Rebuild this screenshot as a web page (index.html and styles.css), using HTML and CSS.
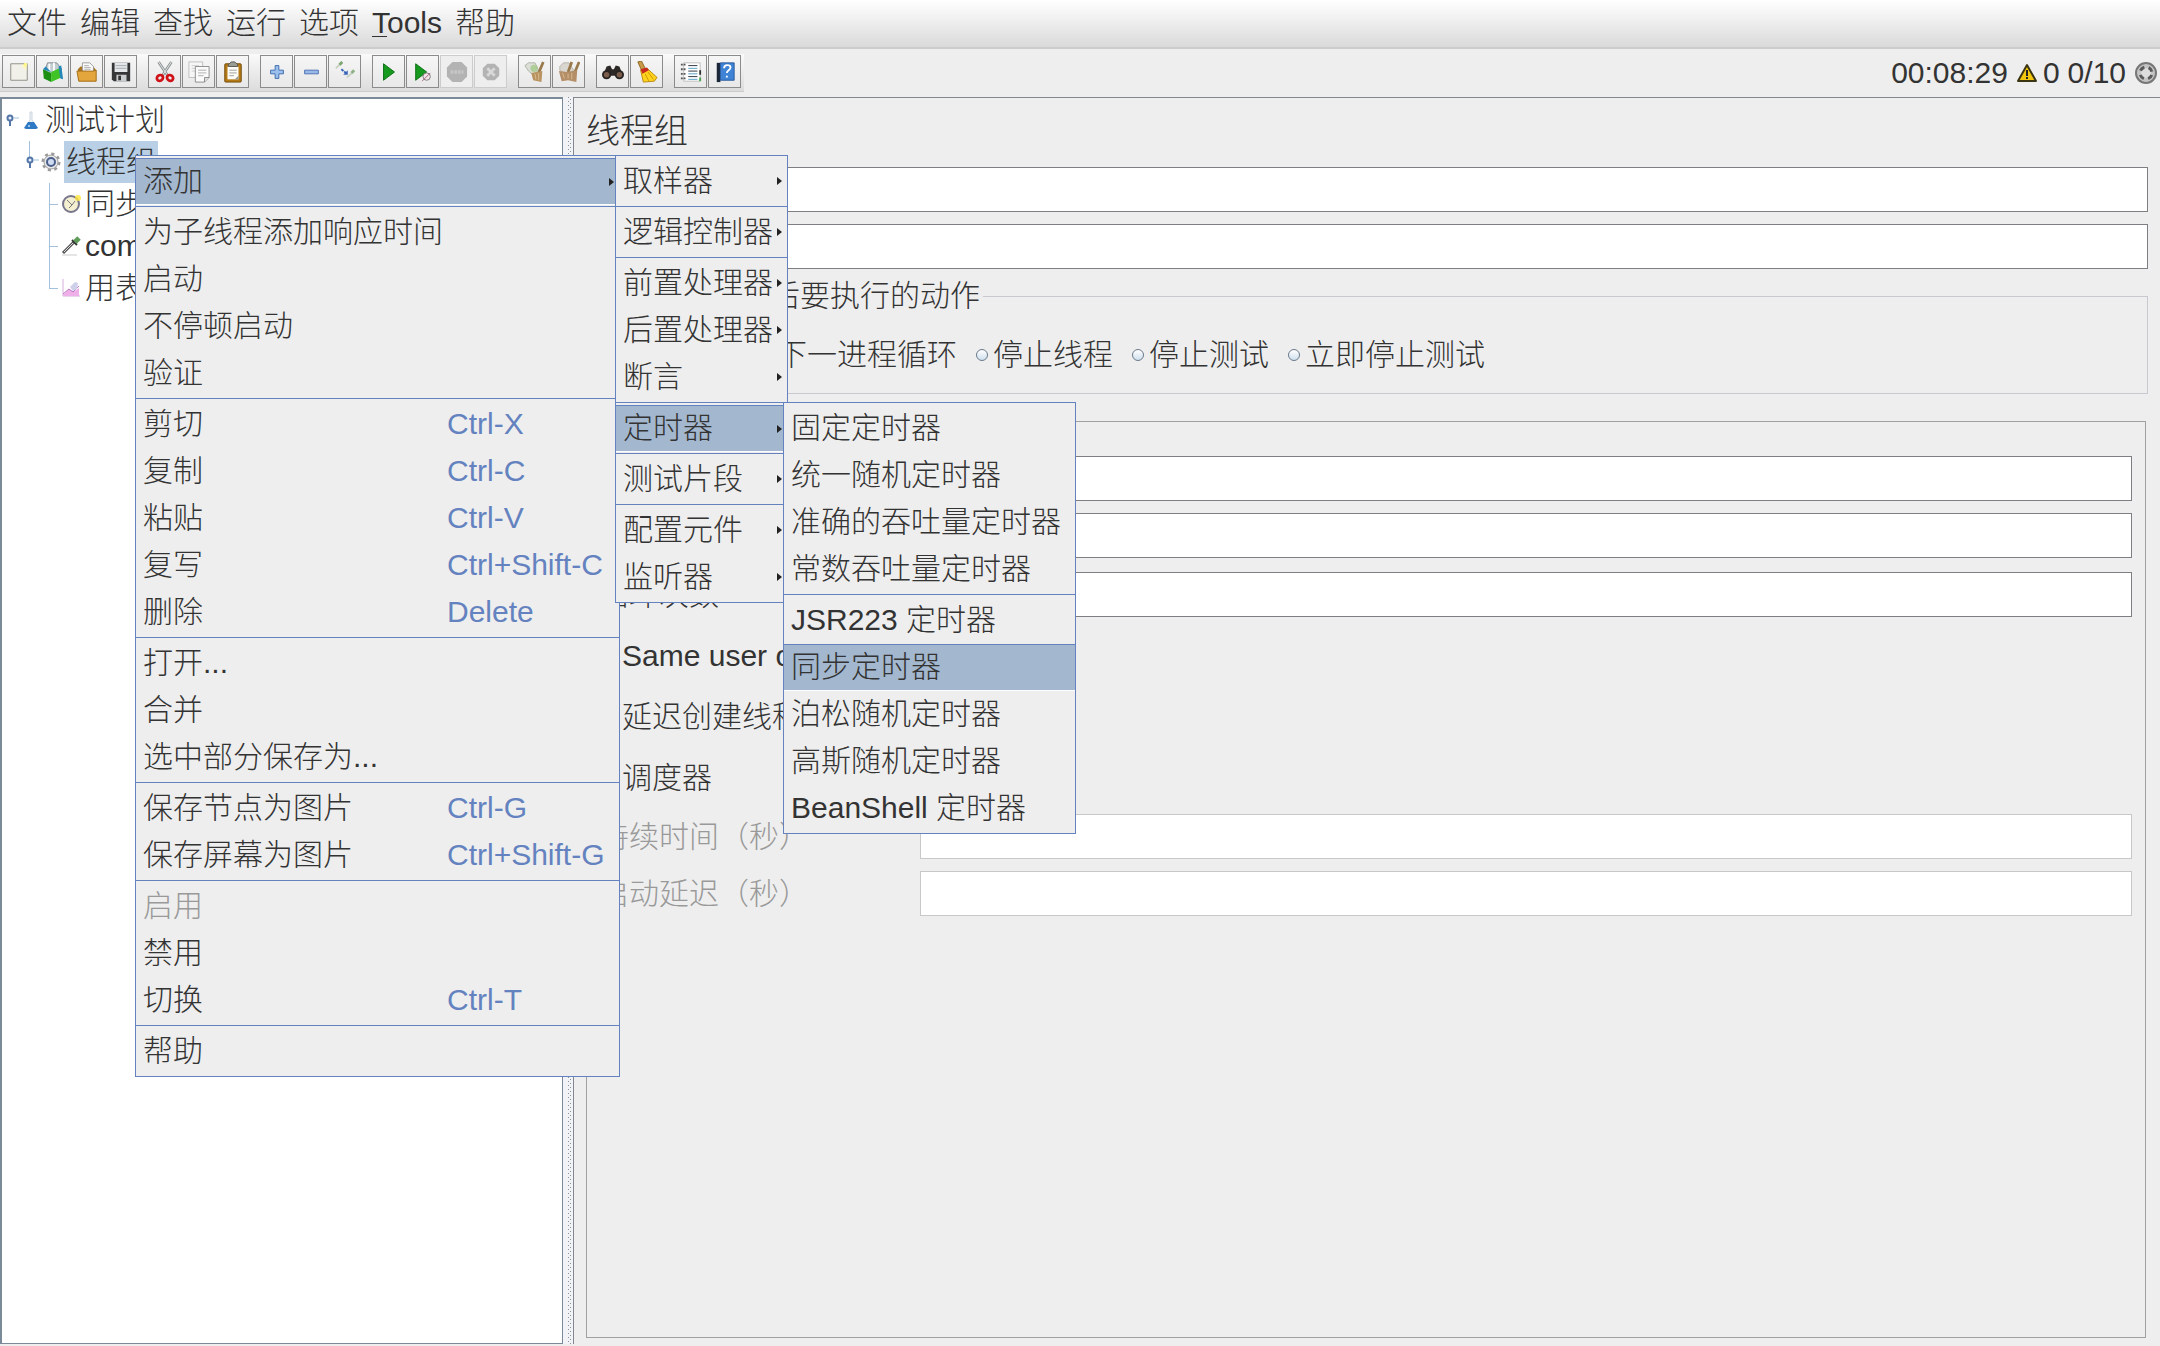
FILE: index.html
```html
<!DOCTYPE html>
<html lang="zh-CN">
<head>
<meta charset="utf-8">
<title>线程组</title>
<link rel="stylesheet" href="styles.css">
</head>
<body>
<nav class="menubar">
  <button>文件</button><button>编辑</button><button>查找</button><button>运行</button><button>选项</button><button><u>T</u>ools</button><button>帮助</button>
</nav>

<header class="bar">
  <div class="toolbar">
    <div class="group">
      <button class="tool" aria-label="新建"><svg viewBox="0 0 24 24"><path d="M3 3h18v18H3z" fill="#f1f1ea" stroke="#8b8b80"/><path d="M14 4h6v7z" fill="#fdf8bf"/><circle cx="19" cy="4" r="2" fill="#fff68b"/></svg></button>
      <button class="tool" aria-label="模板"><svg viewBox="0 0 24 24"><path d="M4 8l2-6h10l5 6v8H4z" fill="#c3ccd0" stroke="#7e8a90"/><path d="M8 3v8M13 2v9" stroke="#fff" stroke-width="2"/><path d="M1 9l9 4v10l-8-4z" fill="#1a8f12"/><path d="M10 12l9-4 2 10-11 5z" fill="#3fc326"/><path d="M1 9l3-3 6 6zM18 6l3-1 2 15-3-1z" fill="#2487b8"/></svg></button>
      <button class="tool" aria-label="打开"><svg viewBox="0 0 24 24"><path d="M2 9l3-3h14l3 4v12H3z" fill="#a8741d"/><path d="M7 11V2h8l4 4v6z" fill="#fafafa" stroke="#999"/><path d="M9 5h5M9 7h7M9 9h7" stroke="#aaa"/><path d="M1 11h18l3-1v12H3z" fill="#e2a63c" stroke="#a16c15"/></svg></button>
      <button class="tool" aria-label="保存"><svg viewBox="0 0 24 24"><path d="M2 2h20v20H4l-2-2z" fill="#343638"/><path d="M5 2h14v10H5z" fill="#e4e7e9"/><path d="M6 5h12M6 8h12" stroke="#a5abb0"/><path d="M7 15h11v7H7z" fill="#c9cdd0"/><path d="M9 16h3v5H9z" fill="#333"/></svg></button>
    </div>
    <div class="group">
      <button class="tool" aria-label="剪切"><svg viewBox="0 0 24 24"><path d="M5 1l10 15M19 1L9 16" stroke="#8d9294" stroke-width="3"/><path d="M5 1l10 15M19 1L9 16" stroke="#eceeee"/><ellipse cx="6.500" cy="18.500" rx="3.500" ry="3" fill="none" stroke="#d01218" stroke-width="3" transform="rotate(-35 6.500 18.500)"/><ellipse cx="17.500" cy="18.500" rx="3.500" ry="3" fill="none" stroke="#d01218" stroke-width="3" transform="rotate(35 17.500 18.500)"/></svg></button>
      <button class="tool" aria-label="复制"><svg viewBox="0 0 24 24"><path d="M1 1h15v17H1z" fill="#f6f6f6" stroke="#bdbdbd"/><path d="M4 5h8M4 8h5M4 11h5" stroke="#ccc"/><path d="M8 6h15v12l-5 5H8z" fill="#fafafa" stroke="#888"/><path d="M11 10h9M11 13h9M11 16h6" stroke="#aaa"/><path d="M18 23v-5h5" fill="#ddd" stroke="#888"/></svg></button>
      <button class="tool" aria-label="粘贴"><svg viewBox="0 0 24 24"><rect x="3" y="3" width="18" height="20" rx="1" fill="#b57a16" stroke="#70480a"/><path d="M6 6h12v14H6z" fill="#fcfcf8"/><path d="M8 10h8M8 13h8M8 16h5" stroke="#999"/><path d="M14 20l4-4v4z" fill="#999"/><path d="M7 6V4l3-3h4l3 3v2z" fill="#9a9d94" stroke="#555"/></svg></button>
    </div>
    <div class="group">
      <button class="tool" aria-label="展开"><svg viewBox="0 0 24 24"><path d="M10 5h4v5h5v4h-5v5h-4v-5H5v-4h5z" fill="#9bc0ee" stroke="#3a67ae"/></svg></button>
      <button class="tool" aria-label="折叠"><svg viewBox="0 0 24 24"><path d="M5 10h15v4H5z" fill="#9bb9e6" stroke="#4a6fb5"/></svg></button>
      <button class="tool" aria-label="切换"><svg viewBox="0 0 24 24"><path d="M2 8l7-7" stroke="#c5d0c0" stroke-width="2"/><path d="M6 4l3-3" stroke="#7da572" stroke-width="3"/><path d="M14 18l8-7" stroke="#c9d2c5" stroke-width="2"/><path d="M19 13l3-3" stroke="#8fb285" stroke-width="3"/><path d="M8 9l5 4" stroke="#3564b8" stroke-width="2" stroke-dasharray="3 1"/><path d="M15 10v5h-5z" fill="#3564b8"/></svg></button>
    </div>
    <div class="group">
      <button class="tool" aria-label="启动"><svg viewBox="0 0 24 24"><path d="M6 3l12 9-12 9z" fill="#159a1e" stroke="#0b6c13"/></svg></button>
      <button class="tool" aria-label="不停顿启动"><svg viewBox="0 0 24 24"><path d="M4 3l12 9-12 9z" fill="#159a1e" stroke="#0b6c13"/><circle cx="16" cy="17" r="4" fill="#f3e4ea" stroke="#777"/><path d="M11 22l9-9" stroke="#a0607a"/></svg></button>
      <button class="tool off" disabled aria-label="停止"><svg viewBox="0 0 24 24"><path d="M7 1h10l6 6v10l-6 6H7l-6-6V7z" fill="#b3b3b3"/><path d="M5 12h14" stroke="#c6c6c6" stroke-width="4" stroke-dasharray="3 1"/></svg></button>
      <button class="tool off" disabled aria-label="关闭"><svg viewBox="0 0 24 24"><path d="M8 3h8l5 5v8l-5 5H8l-5-5V8z" fill="#b3b3b3"/><path d="M8 8l8 8M16 8l-8 8" stroke="#d8d8d8" stroke-width="3"/></svg></button>
    </div>
    <div class="group">
      <button class="tool" aria-label="清除"><svg viewBox="0 0 24 24"><path d="M1 5l4-3h7l4 8-6 5-5-4z" fill="#dcded8" stroke="#aab0a2"/><circle cx="11" cy="8" r="4" fill="#a5c98a" opacity=".8"/><path d="M21 1l-5 12" stroke="#9a7a4c" stroke-width="3"/><path d="M8 13l12-2-1 12-9-2z" fill="#b8935f"/><path d="M12 14l1 6M16 13v8" stroke="#d9bd90"/></svg></button>
      <button class="tool" aria-label="清除全部"><svg viewBox="0 0 24 24"><path d="M2 6l4-4h6l5 8-8 5-7-5z" fill="#dad7d1" stroke="#b5b0a6"/><path d="M15 1l-4 11M23 1l-5 12" stroke="#9a7a4c" stroke-width="3"/><path d="M1 11l9 1 11-2-1 13-9-2-7 1z" fill="#b48e66"/><path d="M5 13l2 6M11 14v5M15 13v7" stroke="#d9bd95"/></svg></button>
    </div>
    <div class="group">
      <button class="tool" aria-label="查找"><svg viewBox="0 0 24 24"><path d="M5 6l4-1 2 4h2l2-4 4 1 4 10H1z" fill="#2c2826"/><circle cx="5" cy="15" r="5" fill="#262322"/><circle cx="19" cy="15" r="5" fill="#262322"/><circle cx="5" cy="15" r="3" fill="#7c5c4a"/><circle cx="19" cy="15" r="3" fill="#7c5c4a"/></svg></button>
      <button class="tool" aria-label="重置查找"><svg viewBox="0 0 24 24"><path d="M2 1l4-1 4 8-4 2z" fill="#c99a4a" stroke="#8b641e"/><path d="M5 10l7-2 11 10-3 4-12 1z" fill="#ffd21c" stroke="#b8860b"/><path d="M5 9l7-2 2 3-7 4z" fill="#c9281e"/><path d="M10 14l4 8M13 12l6 8" stroke="#c99400"/></svg></button>
    </div>
    <div class="group">
      <button class="tool" aria-label="函数助手"><svg viewBox="0 0 24 24"><path d="M4 2h18v20H4z" fill="#fff" stroke="#bbb"/><path d="M9 5h10M9 11h10M9 17h10" stroke="#252a33"/><path d="M9 8h10M9 14h10M9 20h10" stroke="#4e9bc4"/><path d="M1 4h5M1 9h5M1 14h5M1 19h5" stroke="#555" stroke-width="2" stroke-dasharray="2 1"/><path d="M22 10v5" stroke="#333" stroke-width="2"/><path d="M22 18v4" stroke="#43a047" stroke-width="2"/></svg></button>
      <button class="tool" aria-label="帮助"><svg viewBox="0 0 24 24"><path d="M3 2h4v21H3z" fill="#1b2738"/><path d="M7 2h15v19H7z" fill="#3f83d6" stroke="#27599c"/><path d="M11 8c0-5 7-4 7-1 0 3-4 3-4 6M14 16v2" fill="none" stroke="#fff" stroke-width="2"/></svg></button>
    </div>
  </div>
  <div class="status">
    <span class="elapsed">00:08:29</span>
    <svg class="warn" viewBox="0 0 22 20"><path d="M11 2l9 16H2z" fill="#f4c50f" stroke="#3b3413" stroke-width="2" stroke-linejoin="round"/><path d="M11 7v6M11 14v2" stroke="#222" stroke-width="2"/></svg>
    <span class="errors">0</span>
    <span>0/10</span>
    <svg class="remote" viewBox="0 0 24 24"><circle cx="12" cy="12" r="10" fill="#c4c4c4" stroke="#777" stroke-width="2"/><circle cx="12" cy="12" r="5" fill="#ddd"/><circle cx="12" cy="12" r="6" fill="none" stroke="#5a5a5a" stroke-width="3" stroke-dasharray="5 4.425" stroke-dashoffset="-2"/></svg>
  </div>
</header>

<main class="split">
  <aside class="tree">
    <div class="node n1">
      <svg class="handle" viewBox="0 0 14 14"><circle cx="5" cy="5" r="2.500" fill="#e4eefa" stroke="#5577a8" stroke-width="2"/><path d="M5 8v5" stroke="#5577a8" stroke-width="2"/><path d="M8 5h6" stroke="#a3c0dc"/></svg>
      <svg class="icon" viewBox="0 0 20 20"><path d="M9 2h2v8l5 8H4l5-8z" fill="#eef2f6" stroke="#ccd6df"/><path d="M7 12h6l4 6-2 1H5l-2-1z" fill="#2f78c4"/><circle cx="8" cy="16" r="1" fill="#b9dcf6"/></svg>
      <span>测试计划</span>
    </div>
    <div class="node n2">
      <svg class="handle" viewBox="0 0 14 14"><circle cx="5" cy="5" r="2.500" fill="#e4eefa" stroke="#5577a8" stroke-width="2"/><path d="M5 8v5" stroke="#5577a8" stroke-width="2"/><path d="M8 5h6" stroke="#a3c0dc"/></svg>
      <svg class="icon" viewBox="0 0 20 20"><circle cx="10" cy="10" r="8" fill="none" stroke="#9a9a9a" stroke-width="3" stroke-dasharray="3 3.283"/><circle cx="10" cy="10" r="7" fill="#e8e8e8" stroke="#a0a0a0"/><circle cx="10" cy="10" r="4" fill="#cfdcf2" stroke="#4a5f8a" stroke-width="2"/></svg>
      <span class="selected">线程组</span>
    </div>
    <div class="children">
      <div class="node">
        <svg class="icon" viewBox="0 0 20 20"><circle cx="10" cy="10" r="8" fill="#f3efd0" stroke="#77758c" stroke-width="2"/><path d="M6 6l5 5-3 3M11 11l3-4" fill="none" stroke="#777"/><circle cx="17" cy="4" r="3" fill="#ffe53a" opacity=".8"/></svg>
        <span>同步定时器</span>
      </div>
      <div class="node">
        <svg class="icon" viewBox="0 0 20 20"><path d="M2 17L13 6" stroke="#555" stroke-width="3"/><path d="M3 16L13 6" stroke="#d7dcd5"/><path d="M11 4l5 5" stroke="#333" stroke-width="2"/><path d="M14 6l4-4" stroke="#5f9c5a" stroke-width="5"/><path d="M1 19h15" stroke="#ccc"/></svg>
        <span>com</span>
      </div>
      <div class="node">
        <svg class="icon" viewBox="0 0 20 20"><path d="M2 1v17h17" fill="none" stroke="#d3b0db"/><path d="M2 17l6-6 4 3 6-4v8H2z" fill="#efb0ea"/><path d="M2 16l6-5 4 3 6-6" fill="none" stroke="#b96fc0"/><path d="M9 9l5-5 3 1-1 6-4 2z" fill="#cfd0ea"/></svg>
        <span>用表格察看结果</span>
      </div>
    </div>
  </aside>
  <div class="divider"></div>
  <section class="panel">
    <h1>线程组</h1>
    <div class="row top"><label for="name">名称：</label><input id="name" type="text"></div>
    <div class="row top"><label for="note">注释：</label><input id="note" type="text"></div>
    <fieldset class="actions">
      <legend>在取样器错误后要执行的动作</legend>
      <div class="radios">
        <label><input type="radio" name="act" checked>继续</label>
        <label><input type="radio" name="act">启动下一进程循环</label>
        <label><input type="radio" name="act">停止线程</label>
        <label><input type="radio" name="act">停止测试</label>
        <label><input type="radio" name="act">立即停止测试</label>
      </div>
    </fieldset>
    <fieldset class="props">
      <legend>线程属性</legend>
      <div class="row"><label for="threads">线程数：</label><input id="threads" type="text"></div>
      <div class="row"><label for="ramp">Ramp-Up时间（秒）：</label><input id="ramp" type="text"></div>
      <div class="row loops"><label for="loops">循环次数</label><input id="loops" type="text"></div>
      <label class="check"><input type="checkbox">Same user on each iteration</label>
      <label class="check"><input type="checkbox">延迟创建线程直到需要</label>
      <label class="check"><input type="checkbox">调度器</label>
      <div class="row off"><label for="dur">持续时间（秒）</label><input id="dur" type="text" disabled></div>
      <div class="row off"><label for="delay">启动延迟（秒）</label><input id="delay" type="text" disabled></div>
    </fieldset>
  </section>
</main>

<div class="menu context" role="menu">
  <button class="on more">添加</button>
  <hr>
  <button>为子线程添加响应时间</button>
  <button>启动</button>
  <button>不停顿启动</button>
  <button>验证</button>
  <hr>
  <button>剪切<kbd>Ctrl-X</kbd></button>
  <button>复制<kbd>Ctrl-C</kbd></button>
  <button>粘贴<kbd>Ctrl-V</kbd></button>
  <button>复写<kbd>Ctrl+Shift-C</kbd></button>
  <button>删除<kbd>Delete</kbd></button>
  <hr>
  <button>打开...</button>
  <button>合并</button>
  <button>选中部分保存为...</button>
  <hr>
  <button>保存节点为图片<kbd>Ctrl-G</kbd></button>
  <button>保存屏幕为图片<kbd>Ctrl+Shift-G</kbd></button>
  <hr>
  <button disabled>启用</button>
  <button>禁用</button>
  <button>切换<kbd>Ctrl-T</kbd></button>
  <hr>
  <button>帮助</button>
</div>

<div class="menu add" role="menu">
  <button class="more">取样器</button>
  <hr>
  <button class="more">逻辑控制器</button>
  <hr>
  <button class="more">前置处理器</button>
  <button class="more">后置处理器</button>
  <button class="more">断言</button>
  <hr>
  <button class="on more">定时器</button>
  <hr>
  <button class="more">测试片段</button>
  <hr>
  <button class="more">配置元件</button>
  <button class="more">监听器</button>
</div>

<div class="menu timers" role="menu">
  <button>固定定时器</button>
  <button>统一随机定时器</button>
  <button>准确的吞吐量定时器</button>
  <button>常数吞吐量定时器</button>
  <hr>
  <button>JSR223 定时器</button>
  <button class="on">同步定时器</button>
  <button>泊松随机定时器</button>
  <button>高斯随机定时器</button>
  <button>BeanShell 定时器</button>
</div>
</body>
</html>
```
FILE: styles.css
```css
* { box-sizing: border-box; }

body {
  margin: 0;
  min-height: 100vh;
  display: flex;
  flex-direction: column;
  position: relative;
  overflow-x: hidden;
  background: #eee;
  color: #333;
  font: 300 30px/34px "Liberation Sans", "Noto Sans CJK SC", sans-serif;
}

button, input { font: inherit; color: inherit; }

/* Menu bar */
.menubar {
  display: flex;
  gap: 13px;
  height: 49px;
  padding: 0 7px 2px;
  background: linear-gradient(#fff, #dadada);
  border-bottom: 2px solid #ccc;
}
.menubar button { border: 0; padding: 0; background: none; white-space: nowrap; }
.menubar u { text-underline-offset: 3px; text-decoration-thickness: 1px; }

/* Toolbar and run status */
.bar {
  display: flex;
  justify-content: space-between;
  align-items: flex-start;
  height: 48px;
}
.toolbar {
  display: flex;
  gap: 11px;
  margin-top: 5px;
  padding: 1px 3px 3px 2px;
  background: linear-gradient(#fafafa, #dcdcdc);
  border-bottom: 1px solid #ccc;
}
.group { display: flex; gap: 1px; }
.tool {
  display: grid;
  place-items: center;
  width: 33px;
  height: 33px;
  padding: 0;
  border: 1px solid #8b8b8b;
  background: linear-gradient(#f6f6f6, #e8e8e8);
}
.tool svg { width: 22px; height: 22px; }
.tool.off { border-color: #ccc; background: #eee; }
.status { display: flex; align-items: center; height: 47px; padding-right: 2px; }
.elapsed { margin-right: 8px; }
.warn { width: 22px; height: 20px; margin-right: 5px; }
.errors { margin-right: 8px; }
.remote { width: 24px; height: 24px; margin-left: 8px; }

/* Split view */
.split { flex: 1; display: grid; grid-template-columns: 563px 10px 1fr; padding-bottom: 2px; }

.tree { background: #fff; border: 1px solid #7a8a99; border-width: 2px 1px 1px 2px; }
.node { display: flex; align-items: center; height: 42px; white-space: nowrap; }
.handle { width: 14px; height: 14px; flex: none; }
.icon { width: 20px; height: 20px; flex: none; }
.n1 { padding-left: 3px; }
.n1 .icon { margin: 0 4px 0 2px; }
.n2 { padding-left: 23px; background: linear-gradient(#a3c0dc, #a3c0dc) 27px 0 / 1px 16px no-repeat; }
.n2 .icon { margin: 0 3px 0 2px; }
.selected { height: 42px; padding: 4px 2px; background: #b8cfe5; }
.children {
  margin-left: 47px;
  background: linear-gradient(#a3c0dc, #a3c0dc) 0 0 / 1px 106px no-repeat;
}
.children .node { padding-left: 12px; background: linear-gradient(#a3c0dc, #a3c0dc) 0 21px / 9px 1px no-repeat; }
.children .icon { margin-right: 4px; }

.divider {
  background:
    linear-gradient(#8a8f96 1px, transparent 1px) 5px 0 / 1px 4px repeat-y,
    linear-gradient(#8a8f96 1px, transparent 1px) 7px 2px / 1px 4px repeat-y,
    #f1f3f6;
}

.panel {
  display: flex;
  flex-direction: column;
  padding: 13px 12px 6px;
  border: 1px solid #828790;
  border-width: 1px 0 0 1px;
}
h1 { margin: 0 0 16px; font-size: 34px; line-height: 40px; font-weight: 300; }
.row { display: flex; align-items: center; margin-bottom: 12px; }
.row label { flex: none; width: 321px; white-space: nowrap; }
.row.top label { width: 100px; }
.row input { flex: 1; min-width: 0; height: 45px; padding: 0 4px; background: #fff; border: 1px solid #7f7f83; }
.row.off { color: #999; }
.row.off input { border-color: #c8c8c8; }

fieldset { min-width: 0; margin: 0 0 10px; border: 1px solid #a0a0a0; }
legend { padding: 0 3px; }
.actions { margin-top: -2px; padding: 20px 0 16px; border-color: #c8c8d0; }
.radios { display: flex; gap: 19px; padding-left: 17px; }
.radios label { display: flex; align-items: center; gap: 5px; height: 44px; white-space: nowrap; }
input[type="radio"] {
  appearance: none;
  width: 12px;
  height: 12px;
  margin: 0;
  border: 1px solid #6a7a8a;
  border-radius: 50%;
  background: linear-gradient(#fff, #cfe0ee);
}
.props { flex: 1; margin: 0 2px 0 0; padding: 18px 13px 0 12px; }
.loops { padding: 2px 0; margin-bottom: 6px; }
.check { display: flex; align-items: center; gap: 5px; height: 61px; }
.check + .row { margin-top: 6px; }
.check input { appearance: none; width: 18px; height: 18px; margin: 0; border: 1px solid #7a8a99; }

/* Popup menus */
.menu {
  position: absolute;
  padding: 2px 0 1px;
  background: #eee;
  border: 1px solid #6382bf;
}
.context { left: 135px; top: 155px; width: 485px; }
.add { left: 615px; top: 155px; width: 173px; }
.timers { left: 783px; top: 402px; width: 293px; }
.menu button {
  display: block;
  position: relative;
  width: 100%;
  height: 47px;
  padding: 0 7px 2px;
  border: 0;
  background: none;
  text-align: left;
  white-space: nowrap;
}
.menu button:disabled { color: #999; }
.menu .on { background: #a3b8cf; border-top: 1px solid #6382bf; border-bottom: 1px solid #fff; }
.menu hr { height: 4px; margin: 0; border: 0; background: linear-gradient(#6382bf, #6382bf) 0 1px / 100% 1px no-repeat; }
.menu kbd { position: absolute; left: 311px; font: inherit; color: #6382bf; }
.more::after {
  content: "";
  position: absolute;
  right: 5px;
  top: 19px;
  border: 4px solid transparent;
  border-left: 5px solid #222;
  border-right: 0;
}
.context .more::after { right: 2px; }
.context .more { width: 480px; }
```
